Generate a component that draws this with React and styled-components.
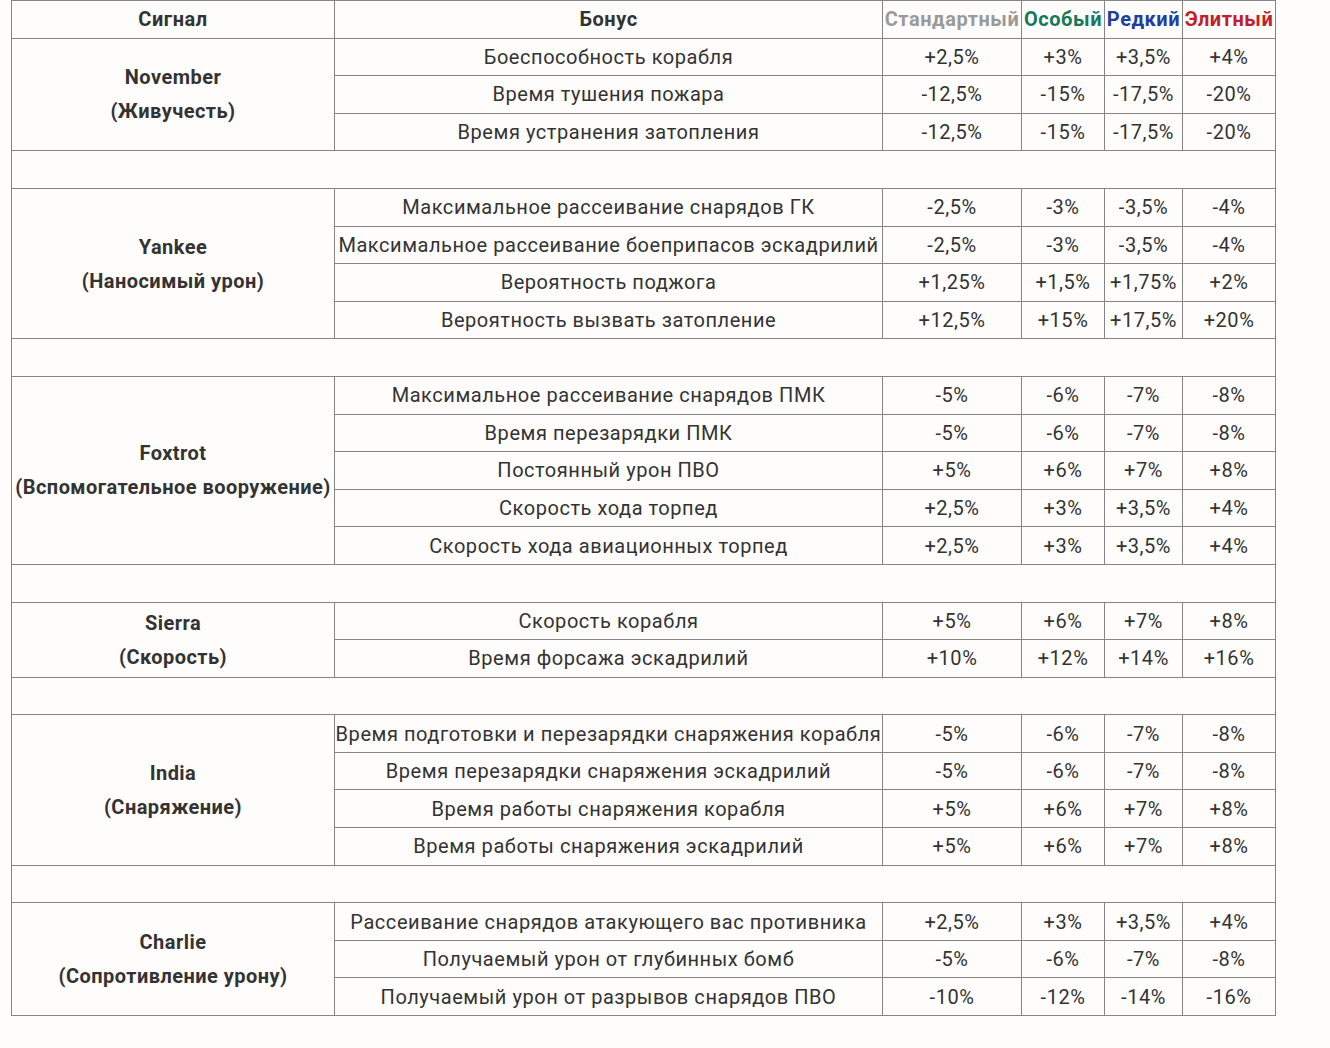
import React from "react";
import styled, { createGlobalStyle } from "styled-components";

const GlobalStyle = createGlobalStyle`
  html, body {
    margin: 0;
    padding: 0;
    background: #fefdfb;
  }
  body {
    font-family: Roboto, "Noto Sans", sans-serif;
    color: #333333;
  }
`;

const Page = styled.div`
  padding: 0 0 0 11px;
`;

const Table = styled.table`
  border-collapse: collapse;
  table-layout: fixed;
  width: 1264px;
  font-size: 20px;
  letter-spacing: 0.55px;
`;

const Col = styled.col`
  width: ${(p) => p.$w}px;
`;

const HeadCell = styled.th`
  border: 1px solid #858585;
  height: 36.6px;
  padding: 0;
  font-weight: 700;
  text-align: center;
  white-space: nowrap;
  color: ${(p) => p.$color || "#333333"};
`;

const Cell = styled.td`
  border: 1px solid #858585;
  height: 36.6px;
  padding: 0;
  text-align: center;
  white-space: nowrap;
  vertical-align: middle;
`;

const SignalCell = styled(Cell)`
  font-weight: 700;
  line-height: 34px;
  letter-spacing: 0.45px;
  white-space: normal;
`;

const SpacerCell = styled.td`
  border: 1px solid #858585;
  height: 36.6px;
  padding: 0;
`;

const colWidths = [323, 548, 139, 83, 78, 93];

const tiers = [
  ["Стандартный", "#9a9a9a"],
  ["Особый", "#17785a"],
  ["Редкий", "#1f3fa0"],
  ["Элитный", "#c0202e"],
];

const groups = [
  {
    name: "November",
    role: "(Живучесть)",
    rows: [
      ["Боеспособность корабля", "+2,5%", "+3%", "+3,5%", "+4%"],
      ["Время тушения пожара", "-12,5%", "-15%", "-17,5%", "-20%"],
      ["Время устранения затопления", "-12,5%", "-15%", "-17,5%", "-20%"],
    ],
  },
  {
    name: "Yankee",
    role: "(Наносимый урон)",
    rows: [
      ["Максимальное рассеивание снарядов ГК", "-2,5%", "-3%", "-3,5%", "-4%"],
      ["Максимальное рассеивание боеприпасов эскадрилий", "-2,5%", "-3%", "-3,5%", "-4%"],
      ["Вероятность поджога", "+1,25%", "+1,5%", "+1,75%", "+2%"],
      ["Вероятность вызвать затопление", "+12,5%", "+15%", "+17,5%", "+20%"],
    ],
  },
  {
    name: "Foxtrot",
    role: "(Вспомогательное вооружение)",
    rows: [
      ["Максимальное рассеивание снарядов ПМК", "-5%", "-6%", "-7%", "-8%"],
      ["Время перезарядки ПМК", "-5%", "-6%", "-7%", "-8%"],
      ["Постоянный урон ПВО", "+5%", "+6%", "+7%", "+8%"],
      ["Скорость хода торпед", "+2,5%", "+3%", "+3,5%", "+4%"],
      ["Скорость хода авиационных торпед", "+2,5%", "+3%", "+3,5%", "+4%"],
    ],
  },
  {
    name: "Sierra",
    role: "(Скорость)",
    rows: [
      ["Скорость корабля", "+5%", "+6%", "+7%", "+8%"],
      ["Время форсажа эскадрилий", "+10%", "+12%", "+14%", "+16%"],
    ],
  },
  {
    name: "India",
    role: "(Снаряжение)",
    rows: [
      ["Время подготовки и перезарядки снаряжения корабля", "-5%", "-6%", "-7%", "-8%"],
      ["Время перезарядки снаряжения эскадрилий", "-5%", "-6%", "-7%", "-8%"],
      ["Время работы снаряжения корабля", "+5%", "+6%", "+7%", "+8%"],
      ["Время работы снаряжения эскадрилий", "+5%", "+6%", "+7%", "+8%"],
    ],
  },
  {
    name: "Charlie",
    role: "(Сопротивление урону)",
    rows: [
      ["Рассеивание снарядов атакующего вас противника", "+2,5%", "+3%", "+3,5%", "+4%"],
      ["Получаемый урон от глубинных бомб", "-5%", "-6%", "-7%", "-8%"],
      ["Получаемый урон от разрывов снарядов ПВО", "-10%", "-12%", "-14%", "-16%"],
    ],
  },
];

function SignalGroup({ group, last }) {
  return (
    <>
      {group.rows.map((row, i) => (
        <tr key={row[0]}>
          {i === 0 && (
            <SignalCell rowSpan={group.rows.length}>
              {group.name}
              <br />
              {group.role}
            </SignalCell>
          )}
          {row.map((v, j) => (
            <Cell key={j}>{v}</Cell>
          ))}
        </tr>
      ))}
      {!last && (
        <tr>
          <SpacerCell colSpan={6} />
        </tr>
      )}
    </>
  );
}

export default function App() {
  return (
    <Page>
      <GlobalStyle />
      <Table>
        <colgroup>
          {colWidths.map((w, i) => (
            <Col key={i} $w={w} />
          ))}
        </colgroup>
        <thead>
          <tr>
            <HeadCell>Сигнал</HeadCell>
            <HeadCell>Бонус</HeadCell>
            {tiers.map(([label, color]) => (
              <HeadCell key={label} $color={color}>
                {label}
              </HeadCell>
            ))}
          </tr>
        </thead>
        <tbody>
          {groups.map((g, i) => (
            <SignalGroup key={g.name} group={g} last={i === groups.length - 1} />
          ))}
        </tbody>
      </Table>
    </Page>
  );
}
